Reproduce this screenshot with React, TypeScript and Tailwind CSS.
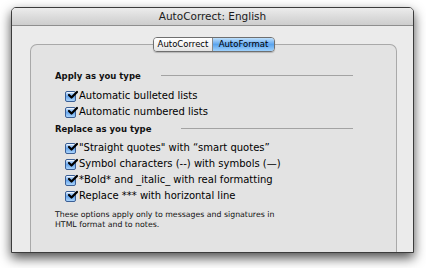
import { Check } from "lucide-react"

const font = { fontFamily: '"DejaVu Sans", "Liberation Sans", sans-serif' }

/* ─── Aqua checkbox ─── */

function AquaCheck({ label }: { label: string }) {
  return (
    <div className="flex items-center h-4 pl-[10px]">
      <span className="relative w-[11px] h-[11px] rounded-[2px] border border-[#3b5f95] bg-gradient-to-b from-[#cfe4fb] via-[#6aa8ee] to-[#a9d3fb] shadow-[inset_0_1px_0_rgba(255,255,255,0.7)]">
        <Check className="absolute -top-[3px] left-[1px] w-[12px] h-[12px] text-black" strokeWidth={4.5} />
      </span>
      <span className="ml-[3px] text-[10px] text-black leading-none">{label}</span>
    </div>
  )
}

/* ─── Section header with rule ─── */

function Header({ title, gap }: { title: string; gap: string }) {
  return (
    <div className="flex items-center h-[14px]">
      <span className="text-[8.5px] font-bold text-[#111] leading-none">{title}</span>
      <div className={`${gap} flex-1 h-[2px] border-t border-[#a3a3a3] border-b-white/60`} />
    </div>
  )
}

export default function App() {
  return (
    <div className="w-[426px] h-[268px] bg-white relative overflow-hidden" style={font}>
      <div className="absolute left-[11px] top-[7px] w-[403px] h-[246px] rounded-t-[5px] border border-[#3c3c3c] bg-[#ebebeb] shadow-[0_5px_12px_rgba(0,0,0,0.7)] flex flex-col overflow-hidden">
        {/* title bar */}
        <div className="h-[18px] shrink-0 flex items-center justify-center bg-gradient-to-b from-[#ececec] via-[#dcdcdc] to-[#cdcdcd] border-b border-[#8e8e8e]">
          <span className="text-[10.5px] text-[#1a1a1a] leading-none">AutoCorrect: English</span>
        </div>

        {/* body */}
        <div className="flex-1 relative pt-[18px] px-[16px] pl-[18px]">
          {/* tabs */}
          <div className="absolute left-[141px] top-[11px] z-10 flex h-[15px] rounded-[4px] border border-[#6f6f6f] overflow-hidden shadow-[0_1px_1px_rgba(0,0,0,0.2)]">
            <div className="w-[59px] flex items-center justify-center text-[8.5px] text-black bg-gradient-to-b from-white via-[#f4f4f4] to-[#e2e2e2] border-r border-[#8a8a8a]">
              AutoCorrect
            </div>
            <div className="w-[61px] flex items-center justify-center text-[8.5px] text-black bg-gradient-to-b from-[#bfe0fb] via-[#5aa4ee] to-[#9fd1fb]">
              AutoFormat
            </div>
          </div>

          {/* group box */}
          <div className="h-full rounded-t-[7px] border border-b-0 border-[#a9a9a9] bg-[#e3e3e3] pt-[24px] pl-[24px] pr-[43px]">
            <Header title="Apply as you type" gap="ml-[20px]" />
            <div className="mt-[5px]">
              <AquaCheck label="Automatic bulleted lists" />
              <AquaCheck label="Automatic numbered lists" />
            </div>
            <div className="mt-[2px]">
              <Header title="Replace as you type" gap="ml-[30px]" />
            </div>
            <div className="mt-[4px]">
              <AquaCheck label={'"Straight quotes" with \u201csmart quotes\u201d'} />
              <AquaCheck label={"Symbol characters (--) with symbols (\u2014)"} />
              <AquaCheck label="*Bold* and _italic_ with real formatting" />
              <AquaCheck label="Replace *** with horizontal line" />
            </div>
            <p className="mt-[6px] text-[7.8px] leading-[10px] text-[#111]">
              These options apply only to messages and signatures in
              <br />
              HTML format and to notes.
            </p>
          </div>
        </div>
      </div>
    </div>
  )
}
